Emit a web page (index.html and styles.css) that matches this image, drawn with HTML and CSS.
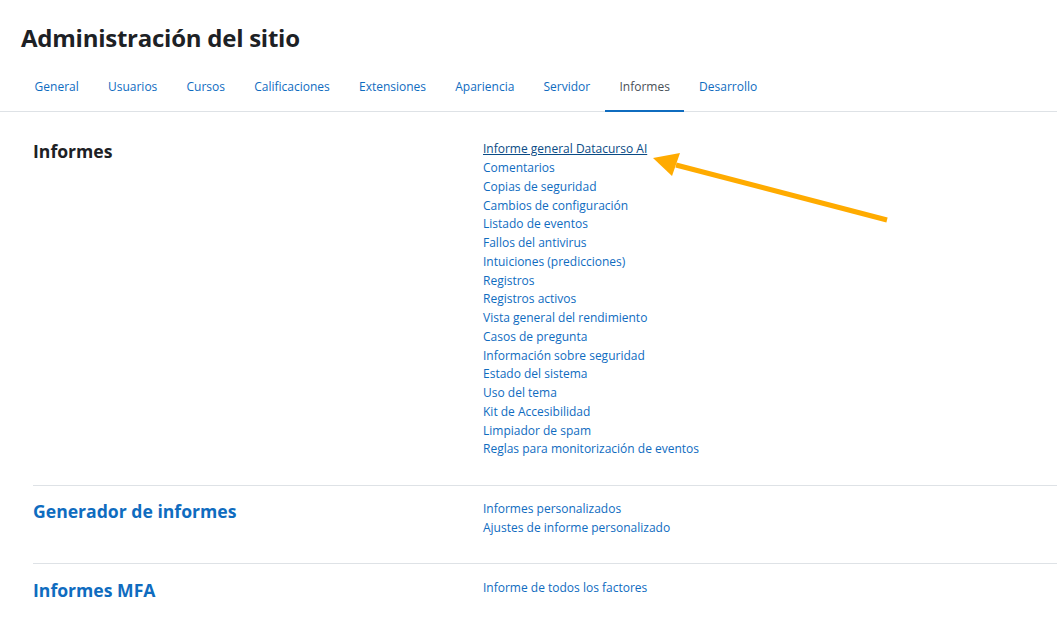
FILE: index.html
```html
<!DOCTYPE html>
<html lang="es">
<head>
<meta charset="utf-8">
<title>Administración del sitio</title>
<link rel="stylesheet" href="styles.css">
</head>
<body>
<div class="page">
  <header class="page-header">
    <h1 class="title">Administración del sitio</h1>
  </header>
  <nav class="tabs">
    <a class="tab" href="#">General</a>
    <a class="tab" href="#">Usuarios</a>
    <a class="tab" href="#">Cursos</a>
    <a class="tab" href="#">Calificaciones</a>
    <a class="tab" href="#">Extensiones</a>
    <a class="tab" href="#">Apariencia</a>
    <a class="tab" href="#">Servidor</a>
    <a class="tab active" href="#">Informes</a>
    <a class="tab" href="#">Desarrollo</a>
  </nav>
  <main class="content">
    <section class="section first">
      <h2 class="section-title plain">Informes</h2>
      <div class="links">
        <a class="link focused" href="#">Informe general Datacurso AI</a>
        <a class="link" href="#">Comentarios</a>
        <a class="link" href="#">Copias de seguridad</a>
        <a class="link" href="#">Cambios de configuración</a>
        <a class="link" href="#">Listado de eventos</a>
        <a class="link" href="#">Fallos del antivirus</a>
        <a class="link" href="#">Intuiciones (predicciones)</a>
        <a class="link" href="#">Registros</a>
        <a class="link" href="#">Registros activos</a>
        <a class="link" href="#">Vista general del rendimiento</a>
        <a class="link" href="#">Casos de pregunta</a>
        <a class="link" href="#">Información sobre seguridad</a>
        <a class="link" href="#">Estado del sistema</a>
        <a class="link" href="#">Uso del tema</a>
        <a class="link" href="#">Kit de Accesibilidad</a>
        <a class="link" href="#">Limpiador de spam</a>
        <a class="link" href="#">Reglas para monitorización de eventos</a>
      </div>
    </section>
    <section class="section">
      <h2 class="section-title"><a href="#">Generador de informes</a></h2>
      <div class="links">
        <a class="link" href="#">Informes personalizados</a>
        <a class="link" href="#">Ajustes de informe personalizado</a>
      </div>
    </section>
    <section class="section">
      <h2 class="section-title"><a href="#">Informes MFA</a></h2>
      <div class="links">
        <a class="link" href="#">Informe de todos los factores</a>
      </div>
    </section>
  </main>
  <svg class="arrow" width="260" height="90" viewBox="0 0 260 90" aria-hidden="true">
    <line x1="25" y1="11" x2="236" y2="66" stroke="#ffab00" stroke-width="5" stroke-linecap="butt"/>
    <polygon points="2,4 29,-1 21,22" fill="#ffab00"/>
  </svg>
</div>
</body>
</html>
```
FILE: styles.css
```css
html, body {
  margin: 0;
  padding: 0;
  background: #ffffff;
}

.page {
  position: relative;
  font-family: "Open Sans", "Noto Sans", sans-serif;
  font-size: 12px;
  line-height: 18.75px;
  color: #1d2125;
}

.page-header {
  padding: 23px 21px 0;
}

.title {
  margin: 0;
  font-size: 24px;
  line-height: 30px;
  font-weight: 700;
  color: #1d2125;
  letter-spacing: -0.25px;
}

.tabs {
  display: flex;
  margin-top: 9px;
  padding-left: 20px;
  border-bottom: 1px solid #dee2e6;
}

.tab {
  display: block;
  padding: 15.6px 14.6px 13.6px;
  border-bottom: 2px solid transparent;
  margin-bottom: -1px;
  color: #0f6cbf;
  text-decoration: none;
}

.tab.active {
  color: #495057;
  border-bottom-color: #0f6cbf;
}

.content {
  padding: 14px 0 0 33px;
}

.section {
  display: grid;
  grid-template-columns: 450px 1fr;
  padding: 14.5px 0 25.5px;
  border-top: 1px solid #dee2e6;
}

.section.first {
  border-top: none;
}

.section-title {
  margin: 0;
  font-size: 17.6px;
  line-height: 22.5px;
  font-weight: 700;
  color: #0f6cbf;
}

.section-title a {
  color: #0f6cbf;
  text-decoration: none;
}

.section-title.plain {
  color: #1d2125;
}

.links {
  display: flex;
  flex-direction: column;
  align-items: flex-start;
}

.link {
  display: block;
  color: #0f6cbf;
  text-decoration: none;
}

.link.focused {
  color: #0a4b85;
  text-decoration: underline;
}

.arrow {
  position: absolute;
  left: 651px;
  top: 154px;
  overflow: visible;
}
```
